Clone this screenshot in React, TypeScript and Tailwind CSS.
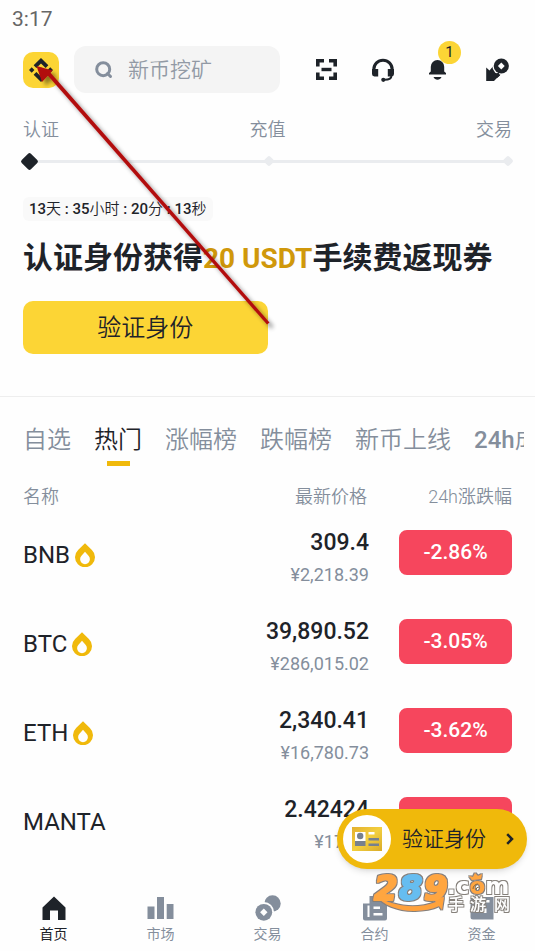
import type { ReactNode } from "react";
import { SiBinance } from "react-icons/si";

const LATIN_CJK = "font-[Roboto,'Noto_Sans_CJK_SC',sans-serif]";

type Coin = { name: string; hot: boolean; price: string; cny: string; change: string };

const coins: Coin[] = [
  { name: "BNB", hot: true, price: "309.4", cny: "¥2,218.39", change: "-2.86%" },
  { name: "BTC", hot: true, price: "39,890.52", cny: "¥286,015.02", change: "-3.05%" },
  { name: "ETH", hot: true, price: "2,340.41", cny: "¥16,780.73", change: "-3.62%" },
  { name: "MANTA", hot: false, price: "2.42424", cny: "¥17.38", change: "-5.12%" },
];

const tabs = ["自选", "热门", "涨幅榜", "跌幅榜", "新币上线"];

function SearchIcon() {
  return (
    <svg className="size-[18px] shrink-0" viewBox="0 0 18 18" fill="none" stroke="#848e9c" strokeWidth="3">
      <circle cx="8.2" cy="8.2" r="6.5" />
      <path d="M12.5 12.5l3 3" strokeLinecap="round" />
    </svg>
  );
}

function ScanIcon() {
  return (
    <svg className="size-[21px]" viewBox="0 0 21 21" fill="#1e2329">
      <path d="M0 0h8v3.6H3.6V7.5H0zM13 0h8v7.5h-3.6V3.6H13zM0 13.5h3.6v3.9H8V21H0zM17.4 13.5H21V21h-8v-3.6h4.4z" />
      <path d="M5.5 8.8h10v3.4h-10z" />
    </svg>
  );
}

function HeadsetIcon() {
  return (
    <svg className="size-6" viewBox="0 0 24 24" fill="none">
      <path d="M2.8 13v-1.6a9.2 9.2 0 0 1 18.4 0V13" stroke="#1e2329" strokeWidth="3" />
      <path d="M1 11h6.200v7.500H3.400A2.400 2.400 0 0 1 1 16.100zM23 11h-6.200v7.500h3.800A2.400 2.400 0 0 0 23 16.100z" fill="#1e2329" />
      <path d="M20.500 17.500c0 2.800-2.500 4.300-7 4.300" stroke="#1e2329" strokeWidth="2" />
      <circle cx="12.300" cy="21.800" r="2.100" fill="#1e2329" />
    </svg>
  );
}

function BellIcon() {
  return (
    <svg className="h-5 w-[17px]" viewBox="0 0 17 20" fill="#1e2329">
      <path d="M8.500 0a6.700 6.700 0 0 1 6.700 6.700V11.500l1.800 1.500v1.500H0V13l1.800-1.500V6.700A6.700 6.700 0 0 1 8.500 0zM4.500 17h8c-.8 1.700-2.200 2.800-4 2.800S5.300 18.700 4.500 17z" />
    </svg>
  );
}

function CoinPenIcon() {
  return (
    <svg className="size-6" viewBox="0 0 24 24">
      <path d="M1.200 9.500l3.300 3L8.300 8l8 8-4.600 4.200L9 23H1.200z" fill="#1e2329" />
      <circle cx="16.300" cy="8" r="9" fill="#fefefe" />
      <path d="M8.800 16.800l4.700-2.200 1.500 2.900-3 2.500z" fill="#1e2329" />
      <circle cx="16.300" cy="8" r="7.600" fill="#1e2329" />
      <path d="M16.300 4.600l3.400 3.400-3.400 3.400-3.400-3.400z" fill="#fefefe" />
    </svg>
  );
}

function FlameIcon() {
  return (
    <svg className="h-6 w-5" viewBox="0 0 20 24">
      <path d="M10 .3l6.900 6.700a10 10 0 1 1-13.800 0z" fill="#f0b90b" />
      <path d="M10 8.800l3.500 4a4.900 4.900 0 1 1-7 0z" fill="#fefefe" />
    </svg>
  );
}

function HomeIcon() {
  return (
    <svg className="h-6 w-6" viewBox="0 0 24 24" fill="#1e2329">
      <path d="M12 .5L23.500 11.500V24H16V14.500H8V24H.5V11.500z" />
    </svg>
  );
}

function MarketIcon() {
  return (
    <svg className="h-6 w-[27px]" viewBox="0 0 27 24" fill="#848e9c">
      <path d="M.5 10.500h7V23h-7zM10 1h7V23h-7zM19.700 8h6.800V23h-6.800z" />
    </svg>
  );
}

function TradeIcon() {
  return (
    <svg className="h-[26px] w-[26px]" viewBox="0 0 26 26">
      <circle cx="17.500" cy="8.500" r="8.200" fill="#848e9c" />
      <circle cx="8.800" cy="17.300" r="10.300" fill="#fefefe" />
      <circle cx="8.800" cy="17.300" r="8.400" fill="#848e9c" />
      <path d="M8.800 13.500l3.700 3.800-3.700 3.800-3.700-3.800z" fill="#fefefe" />
    </svg>
  );
}

function FuturesIcon() {
  return (
    <svg className="h-[26px] w-6" viewBox="0 0 24 26">
      <path d="M6.500 1h14v6H24v16.500a2 2 0 0 1-2 2H2a2 2 0 0 1-2-2V8.500h6.500z" fill="#848e9c" />
      <path d="M4.500 10.500h2V22h-2zM10.500 11.500h6.500v2.500h-6.500zM10.500 18h9v2.500h-9z" fill="#fefefe" />
    </svg>
  );
}

function WalletIcon() {
  return (
    <svg className="h-6 w-6" viewBox="0 0 24 24">
      <path d="M3 1h20.500v22.500H3a2.500 2.500 0 0 1-2.500-2.500V3.500A2.500 2.500 0 0 1 3 1z" fill="#848e9c" />
      <path d="M3.500 4h16v2.500h-16zM12 12.500h4.500V17H12z" fill="#fefefe" />
    </svg>
  );
}

function IdCardIcon() {
  return (
    <svg className="h-6 w-[30px]" viewBox="0 0 30 24">
      <defs>
        <linearGradient id="card" x1="0" y1="0" x2="1" y2="1">
          <stop offset="0" stopColor="#e3b02e" />
          <stop offset=".5" stopColor="#f3cf3f" />
          <stop offset="1" stopColor="#d9ab2a" />
        </linearGradient>
      </defs>
      <path d="M0 0h30v24H0z" fill="url(#card)" />
      <path d="M3 5h10.500v9H3zM16.500 5h6v2.600h-6z" fill="#fff" />
      <circle cx="8.200" cy="9" r="3.200" fill="#76808f" />
      <path d="M3 14h10.500v5H3zM16.500 11h10.500v2.500h-10.500zM16.500 16.500h10.500V19h-10.500z" fill="#76808f" />
    </svg>
  );
}

function StepDot({ active = false }: { active?: boolean }) {
  return (
    <span className="relative flex size-[18px] items-center justify-center">
      <span className={active ? "size-[13px] rotate-45 rounded-xs bg-[#1e2329]" : "size-2 rotate-45 rounded-xs bg-[#eaecef]"} />
    </span>
  );
}

function NavItem({ label, active = false, children }: { label: string; active?: boolean; children: ReactNode }) {
  return (
    <a href="#" className="flex flex-1 flex-col items-center">
      <span className="flex h-7 items-center">{children}</span>
      <span className={`text-[14px] leading-6 ${active ? "text-[#1e2329]" : "text-[#848e9c]"}`}>{label}</span>
    </a>
  );
}

function PointerArrow() {
  return (
    <svg className="pointer-events-none absolute top-[50px] left-[20px] h-[290px] w-[265px]" viewBox="20 50 265 290">
      <defs>
        <filter id="arrowShadow" x="-10%" y="-10%" width="120%" height="120%">
          <feDropShadow dx="4" dy="4" stdDeviation="2" floodColor="#000" floodOpacity=".45" />
        </filter>
      </defs>
      <g filter="url(#arrowShadow)" fill="#b20c10">
        <path d="M46 73.500l3-2.500L269.500 322.500l-2.500 2z" />
        <path d="M36.500 66L52.500 70.500L42 82z" />
      </g>
    </svg>
  );
}

function Watermark() {
  return (
    <svg className="pointer-events-none absolute right-[20px] bottom-[34px] h-[48px] w-[145px]" viewBox="370 869 145 48">
      <defs>
        <filter id="markOutline" x="-5%" y="-10%" width="110%" height="120%">
          <feMorphology in="SourceAlpha" operator="dilate" radius="1" result="grown" />
          <feFlood floodColor="#85807a" />
          <feComposite in2="grown" operator="in" />
          <feMerge>
            <feMergeNode />
            <feMergeNode in="SourceGraphic" />
          </feMerge>
        </filter>
      </defs>
      <g filter="url(#markOutline)">
        <path d="M375 894c16 14 44 15 61 8l-3-3 11-2-2 13-3-4c-20 9-52 6-64-12z" fill="#ffa23a" />
        <g
          className="font-['DejaVu_Sans',sans-serif] text-[34px] font-bold italic"
          strokeWidth="2"
          strokeLinejoin="round"
        >
          <text x="374" y="900" fill="#ffa640" stroke="#ffa640">2</text>
          <text x="399" y="900" fill="#66bdf0" stroke="#66bdf0">8</text>
          <text x="424" y="900" fill="#ffa640" stroke="#ffa640">9</text>
        </g>
      </g>
      <g filter="url(#markOutline)" fill="#fff">
        <text x="447" y="894" className="font-['DejaVu_Sans',sans-serif] text-[23px] font-bold">
          .c<tspan fill="#ffa640">o</tspan>m
        </text>
        <path d="M472 880l-3-4 4 1 2-4 3 3 4-2-1 5z" fill="#ffa640" />
      </g>
      <path d="M473 889a5 5 0 0 1 5-5M476 890a3 3 0 0 1 3-3" fill="none" stroke="#8a6a3c" strokeWidth="1" />
      <g filter="url(#markOutline)" fill="#fff" className="font-['Noto_Sans_CJK_SC',sans-serif] text-[16px] font-medium">
        <text x="448" y="910">手</text>
        <text x="470" y="910">游</text>
        <text x="494" y="910">网</text>
      </g>
    </svg>
  );
}

export default function App() {
  return (
    <div className={`relative flex min-h-screen flex-col overflow-hidden bg-[#fefefe] text-[#1e2329] ${LATIN_CJK}`}>
      <div className="h-[46px] px-3 pt-[5px] text-[21px] leading-7 text-[#666]">3:17</div>

      <header className="flex h-[47px] items-center px-[23px]">
        <button aria-label="Binance" className="flex size-9 shrink-0 items-center justify-center rounded-[10px] bg-[#fcd535]">
          <SiBinance className="size-6" />
        </button>
        <label className="ml-[15px] flex h-full w-[206px] items-center gap-[15px] rounded-xl bg-[#f4f4f4] pl-[21px]">
          <SearchIcon />
          <input
            type="search"
            aria-label="搜索"
            placeholder="新币挖矿"
            className="w-full min-w-0 bg-transparent pt-[2px] text-[21px] font-[350] outline-none placeholder:text-[#929aa5]"
          />
        </label>
        <div className="ml-auto flex gap-[27px]">
          <button aria-label="扫一扫" className="flex size-[30px] items-center justify-center">
            <ScanIcon />
          </button>
          <button aria-label="客服" className="flex size-[30px] items-center justify-center">
            <HeadsetIcon />
          </button>
          <button aria-label="通知" className="relative flex size-[30px] items-center justify-start pl-1">
            <BellIcon />
            <span className="absolute -top-[14px] left-[13px] flex size-[23px] items-center justify-center rounded-full bg-[#fcd535] text-[15px]">
              1
            </span>
          </button>
          <button aria-label="付款" className="flex size-[30px] items-center justify-center">
            <CoinPenIcon />
          </button>
        </div>
      </header>

      <section className="border-b border-[#eeeeee] pb-[42px]">
        <div className="flex justify-between px-[23px] pt-[25px] text-[18px] leading-6 font-[350] text-[#848e9c]">
          <span>认证</span>
          <span>充值</span>
          <span>交易</span>
        </div>
        <div className="relative mr-[18px] ml-[20px] mt-[10px] flex justify-between">
          <span className="absolute inset-x-2 top-[8px] h-[3px] bg-[#eaecef]" />
          <StepDot active />
          <StepDot />
          <StepDot />
        </div>
        <div className="px-[23px]">
          <p className="mt-[27px] inline-block rounded-md bg-[#f9f9f9] px-[6px] text-[15px] leading-6 font-[350]">
            <b className="font-medium">13</b>天<b className="font-medium"> : 35</b>小时<b className="font-medium"> : 20</b>分
            <b className="font-medium"> : 13</b>秒
          </p>
          <h1 className="mt-[15px] text-[30px] leading-[44px] font-bold whitespace-nowrap">
            认证身份获得<span className="text-[28px] text-[#d0980b]">20 USDT</span>手续费返现券
          </h1>
          <button className="mt-5 block h-[53px] w-1/2 rounded-[10px] bg-[#fcd535] text-2xl font-[350]">验证身份</button>
        </div>
      </section>

      <nav className="mr-[11px] flex gap-[23px] overflow-hidden pt-[23px] pl-[23px] text-2xl leading-10 font-[350] whitespace-nowrap text-[#848e9c]">
        {tabs.map((tab) => (
          <button key={tab} className={`flex shrink-0 flex-col items-center ${tab === "热门" ? "text-[#1e2329]" : ""}`}>
            {tab}
            <span className={`mt-px h-[5px] w-[23px] ${tab === "热门" ? "bg-[#f0b90b]" : ""}`} />
          </button>
        ))}
        <button className="flex shrink-0">
          <span className="font-medium">24h</span>成交额
        </button>
      </nav>

      <table className="mt-5 w-full table-fixed">
        <thead>
          <tr className="text-[18px] leading-[22px] text-[#848e9c]">
            <th className="pl-[23px] text-left font-[350]">名称</th>
            <th className="w-[175px] pr-[2px] text-right font-[350]">最新价格</th>
            <th className="w-[166px] pr-[23px] text-right font-[350]">24h涨跌幅</th>
          </tr>
        </thead>
        <tbody>
          {coins.map((coin) => (
            <tr key={coin.name} className="h-[89px]">
              <td className="pl-[23px]">
                <span className="flex items-center gap-[5px] pt-[5px] text-2xl">
                  {coin.name}
                  {coin.hot && <FlameIcon />}
                </span>
              </td>
              <td className="text-right">
                <div className="pt-[13px] text-[23px] leading-8 font-medium">{coin.price}</div>
                <div className="text-[18px] leading-8 text-[#848e9c]">{coin.cny}</div>
              </td>
              <td className="pr-[23px] pl-[30px]">
                <span className="flex h-[45px] items-center justify-center rounded-lg bg-[#f6465d] text-[21px] font-medium text-white">
                  {coin.change}
                </span>
              </td>
            </tr>
          ))}
        </tbody>
      </table>

      <nav className="relative mt-auto flex pt-6 pb-[5px]">
        <NavItem label="首页" active>
          <HomeIcon />
        </NavItem>
        <NavItem label="市场">
          <MarketIcon />
        </NavItem>
        <NavItem label="交易">
          <TradeIcon />
        </NavItem>
        <NavItem label="合约">
          <FuturesIcon />
        </NavItem>
        <NavItem label="资金">
          <WalletIcon />
        </NavItem>
      </nav>

      <button className="absolute right-2 bottom-[82px] flex h-[60px] w-[190px] items-center rounded-full bg-[#f0b90b] pl-[6px] text-[21px] font-[350] shadow-md">
        <span className="flex size-12 items-center justify-center rounded-full bg-white">
          <IdCardIcon />
        </span>
        <span className="ml-[11px] pt-[2px]">验证身份</span>
        <svg className="ml-[20px] h-3 w-2" viewBox="0 0 8 12" fill="none" stroke="#1e2329" strokeWidth="2.500">
          <path d="M1.200 1.200L6 6l-4.800 4.800" />
        </svg>
      </button>

      <Watermark />
      <PointerArrow />
    </div>
  );
}
